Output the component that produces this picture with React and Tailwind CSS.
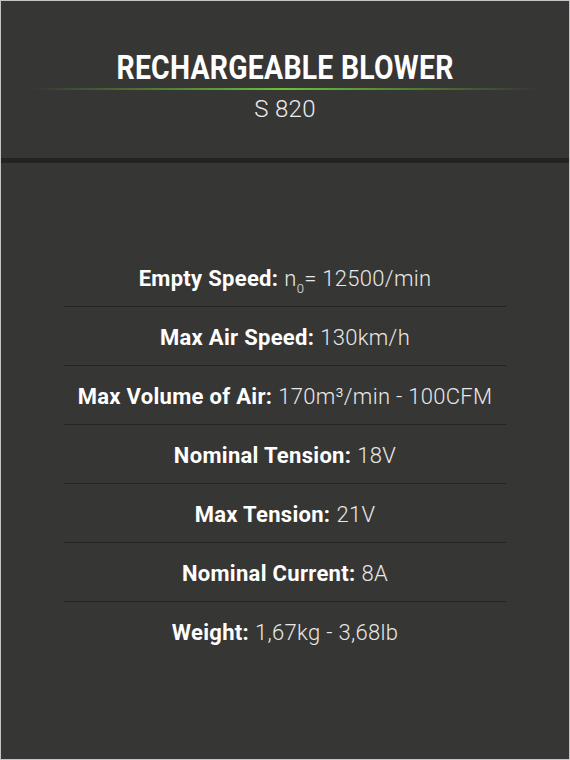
import React from "react";

const specs = [
  { label: "Empty Speed:", value: (<>n<sub className="text-[13px] align-[-4px]">0</sub>= 12500/min</>) },
  { label: "Max Air Speed:", value: "130km/h" },
  { label: "Max Volume of Air:", value: "170m³/min - 100CFM" },
  { label: "Nominal Tension:", value: "18V" },
  { label: "Max Tension:", value: "21V" },
  { label: "Nominal Current:", value: "8A" },
  { label: "Weight:", value: "1,67kg - 3,68lb" },
];

const App = () => {
  return (
    <div className="w-[570px] h-[760px] border border-[#c4c4c4] bg-[#363634] font-['Roboto',sans-serif] flex flex-col">
      <div className="pt-[50px] pb-[37px] flex flex-col items-center">
        <h1 className="text-[33px] leading-[33px] font-bold text-white whitespace-nowrap scale-x-[0.86] tracking-[0.3px]">
          RECHARGEABLE BLOWER
        </h1>
        <div className="mt-[4px] h-[2px] w-[510px] bg-[linear-gradient(to_right,transparent,#6cc13a_50%,transparent)]" />
        <p className="mt-[7px] text-[24px] leading-[24px] font-light text-[#ececec] tracking-[0.3px]">S 820</p>
      </div>
      <div className="h-[5px] bg-[#232321]" />

      <div className="pt-[85px] px-[63px]">
        {specs.map((s, i) => (
          <div
            key={s.label}
            className={
              "h-[59px] pt-[2px] flex items-center justify-center text-[22px] tracking-[0.3px] whitespace-nowrap " +
              (i < specs.length - 1 ? "border-b border-[#242422]" : "")
            }
          >
            <span className="font-bold text-white">{s.label}</span>
            <span className="font-light text-[#e8e8e8] ml-[6px]">{s.value}</span>
          </div>
        ))}
      </div>
    </div>
  );
};

export default App;
